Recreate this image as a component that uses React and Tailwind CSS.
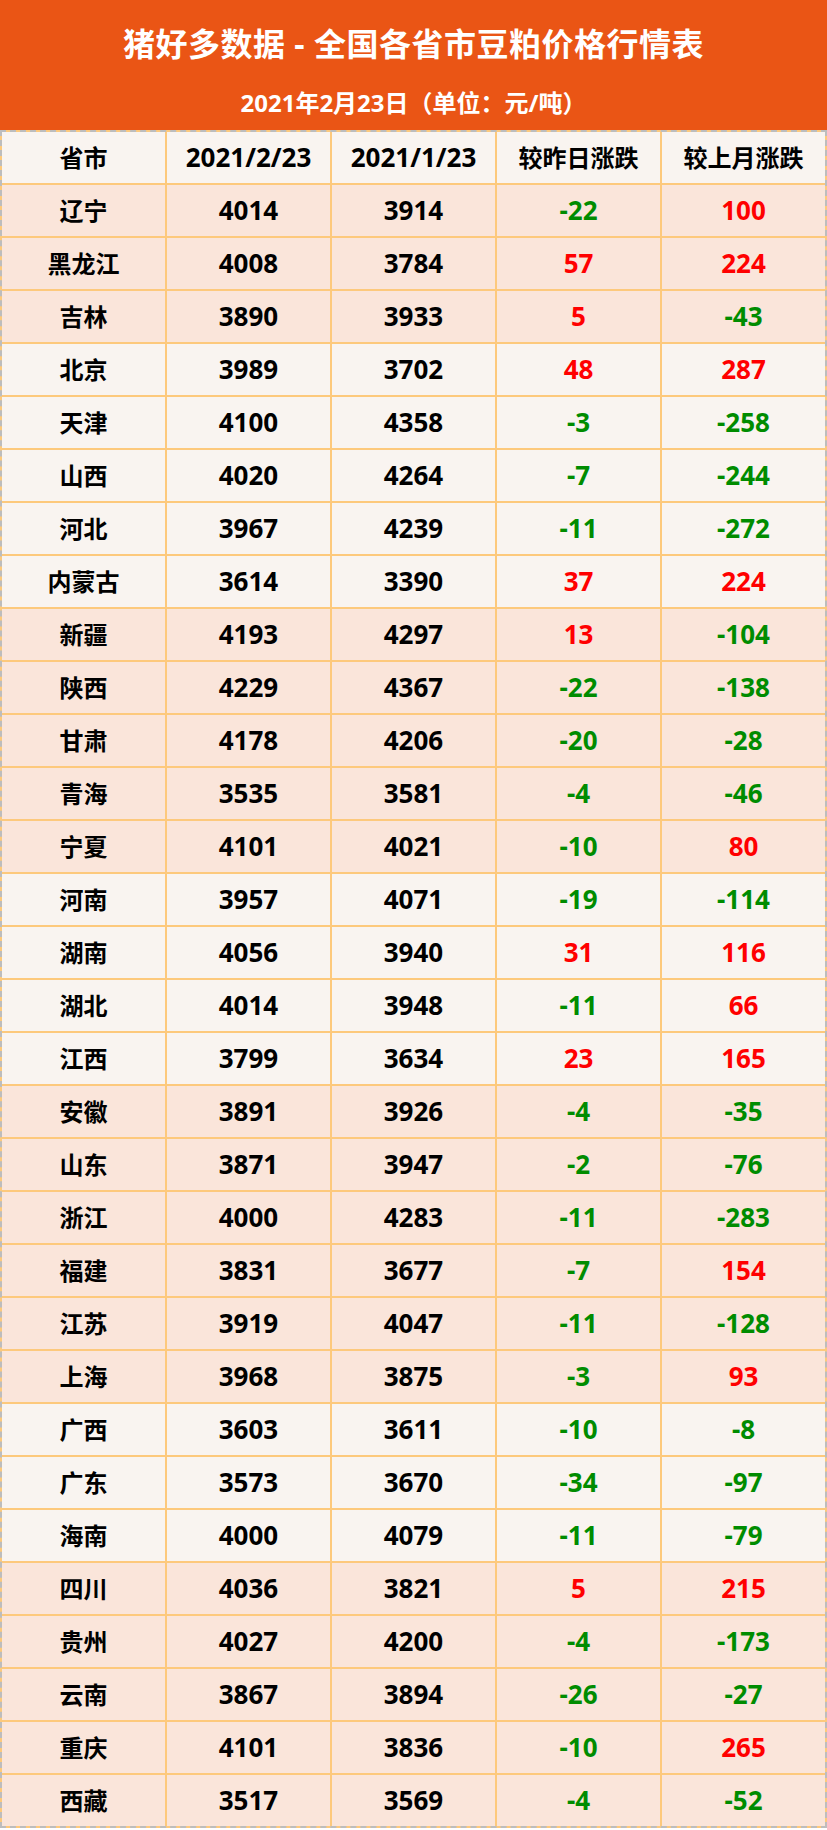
import React from "react";

const rows = [
  ["辽宁", 4014, 3914, -22, 100, "a"],
  ["黑龙江", 4008, 3784, 57, 224, "a"],
  ["吉林", 3890, 3933, 5, -43, "a"],
  ["北京", 3989, 3702, 48, 287, "b"],
  ["天津", 4100, 4358, -3, -258, "b"],
  ["山西", 4020, 4264, -7, -244, "b"],
  ["河北", 3967, 4239, -11, -272, "b"],
  ["内蒙古", 3614, 3390, 37, 224, "b"],
  ["新疆", 4193, 4297, 13, -104, "a"],
  ["陕西", 4229, 4367, -22, -138, "a"],
  ["甘肃", 4178, 4206, -20, -28, "a"],
  ["青海", 3535, 3581, -4, -46, "a"],
  ["宁夏", 4101, 4021, -10, 80, "a"],
  ["河南", 3957, 4071, -19, -114, "b"],
  ["湖南", 4056, 3940, 31, 116, "b"],
  ["湖北", 4014, 3948, -11, 66, "b"],
  ["江西", 3799, 3634, 23, 165, "b"],
  ["安徽", 3891, 3926, -4, -35, "a"],
  ["山东", 3871, 3947, -2, -76, "a"],
  ["浙江", 4000, 4283, -11, -283, "a"],
  ["福建", 3831, 3677, -7, 154, "a"],
  ["江苏", 3919, 4047, -11, -128, "a"],
  ["上海", 3968, 3875, -3, 93, "a"],
  ["广西", 3603, 3611, -10, -8, "b"],
  ["广东", 3573, 3670, -34, -97, "b"],
  ["海南", 4000, 4079, -11, -79, "b"],
  ["四川", 4036, 3821, 5, 215, "a"],
  ["贵州", 4027, 4200, -4, -173, "a"],
  ["云南", 3867, 3894, -26, -27, "a"],
  ["重庆", 4101, 3836, -10, 265, "a"],
  ["西藏", 3517, 3569, -4, -52, "a"],
];

const font = { fontFamily: '"Noto Sans", "Noto Sans CJK SC", sans-serif' };

// num = true uses a slightly larger size, the latin digits run wider in the original
const Cell = ({ children, bg, color = "text-black", num }) => (
  <div
    className={`${bg} ${color} ${num ? "text-[26px]" : "text-[24px]"} h-[51px] flex items-center justify-center font-bold`}
  >
    {children}
  </div>
);

const Change = ({ v, bg }) => (
  <Cell bg={bg} num color={v < 0 ? "text-[#008c00]" : "text-[#ff0000]"}>
    {v}
  </Cell>
);

export default function App() {
  return (
    <div className="w-[827px] bg-white" style={font}>
      {/* header */}
      <div className="bg-[#ea5515] h-[130px] flex flex-col items-center text-white font-bold">
        <div className="text-[32px] leading-none mt-[28px] tracking-[0.5px]">猪好多数据 - 全国各省市豆粕价格行情表</div>
        <div className="text-[24px] leading-none mt-[31px]">2021年2月23日（单位：元/吨）</div>
      </div>

      {/* table */}
      <div className="border-2 border-dashed border-[#bdbdbd] bg-[#fdc97c]">
        <div className="grid grid-cols-5 gap-[2px]">
          <Cell bg="bg-[#f9f4f0]">省市</Cell>
          <Cell bg="bg-[#f9f4f0]" num>2021/2/23</Cell>
          <Cell bg="bg-[#f9f4f0]" num>2021/1/23</Cell>
          <Cell bg="bg-[#f9f4f0]">较昨日涨跌</Cell>
          <Cell bg="bg-[#f9f4f0]">较上月涨跌</Cell>
        </div>
        {rows.map(([name, a, b, d, m, t]) => {
          const bg = t === "a" ? "bg-[#fae5da]" : "bg-[#f9f4f0]";
          return (
            <div key={name} className="grid grid-cols-5 gap-[2px] mt-[2px]">
              <Cell bg={bg}>{name}</Cell>
              <Cell bg={bg} num>{a}</Cell>
              <Cell bg={bg} num>{b}</Cell>
              <Change v={d} bg={bg} />
              <Change v={m} bg={bg} />
            </div>
          );
        })}
      </div>
    </div>
  );
}
